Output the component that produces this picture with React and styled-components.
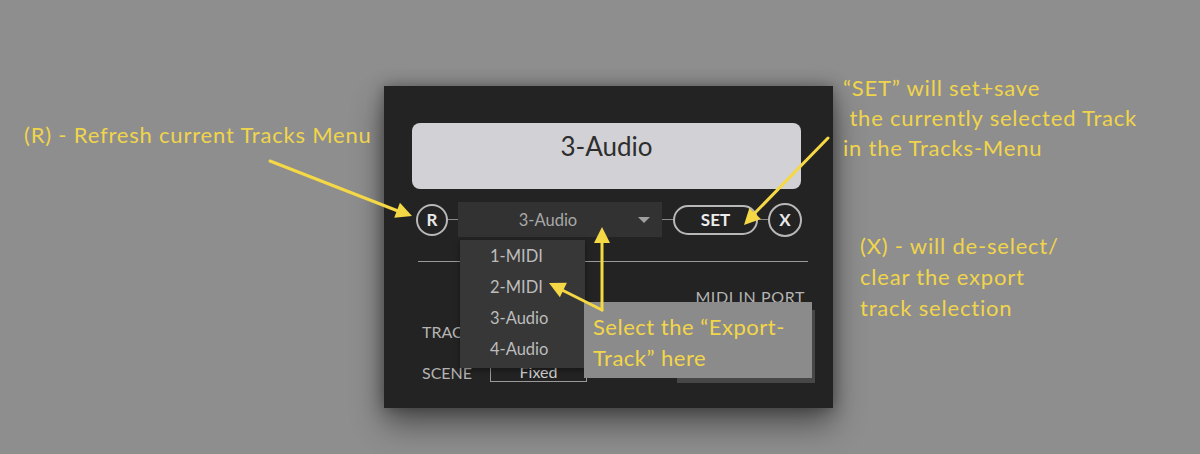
import React from "react";
import styled, { createGlobalStyle } from "styled-components";

const GlobalStyle = createGlobalStyle`
  html, body {
    margin: 0;
    padding: 0;
    background: #8e8e8e;
  }
`;

const Page = styled.div`
  position: relative;
  width: 1200px;
  height: 454px;
  overflow: hidden;
  background: #8e8e8e;
  padding: 86px 0 0 384px;
  box-sizing: border-box;
`;

const Panel = styled.div`
  position: relative;
  width: 449px;
  height: 322px;
  box-sizing: border-box;
  padding: 37px 32px 0 28px;
  background: #232323;
  box-shadow: 0 16px 30px rgba(0, 0, 0, 0.45), 0 0 14px rgba(0, 0, 0, 0.35);
  display: flex;
  flex-direction: column;
  font-family: "Lato", "Open Sans", sans-serif;
`;

const Display = styled.div`
  height: 66px;
  box-sizing: border-box;
  padding-top: 7px;
  border-radius: 8px;
  background: #d2d2d6;
  color: #2e2e2e;
  font-size: 26px;
  display: flex;
  align-items: flex-start;
  justify-content: center;
`;

const Row = styled.div`
  margin-top: 13px;
  margin-left: 4px;
  height: 35px;
  display: flex;
  align-items: center;
`;

const Circle = styled.div`
  width: ${(p) => p.size}px;
  height: ${(p) => p.size}px;
  box-sizing: border-box;
  border: 2px solid #b8b8b8;
  border-radius: 50%;
  color: #e8e8e8;
  font-size: 17px;
  font-weight: 700;
  display: flex;
  align-items: center;
  justify-content: center;
  flex-shrink: 0;
`;

const Connector = styled.div`
  width: ${(p) => p.w}px;
  height: 1px;
  background: #8a8a8a;
  flex-shrink: 0;
`;

const Dropdown = styled.div`
  position: relative;
  width: 204px;
  height: 35px;
  box-sizing: border-box;
  padding-right: 24px;
  background: #323232;
  color: #a8a8a8;
  font-size: 16.5px;
  display: flex;
  align-items: center;
  justify-content: center;
  flex-shrink: 0;
`;

const Caret = styled.span`
  position: absolute;
  right: 12px;
  top: 15px;
  width: 0;
  height: 0;
  border-left: 6px solid transparent;
  border-right: 6px solid transparent;
  border-top: 6px solid #a0a0a0;
`;

const Menu = styled.div`
  position: absolute;
  left: 2px;
  top: 38px;
  width: 125px;
  height: 128px;
  background: #373737;
  box-shadow: 0 2px 6px rgba(0, 0, 0, 0.4);
  z-index: 3;
  display: flex;
  flex-direction: column;
  padding: 1px 0 0 30px;
  box-sizing: border-box;
`;

const MenuItem = styled.div`
  height: 31px;
  line-height: 31px;
  color: #bdbdbd;
  font-size: 16.5px;
`;

const SetButton = styled.div`
  width: 85px;
  height: 30px;
  box-sizing: border-box;
  border: 2px solid #b8b8b8;
  border-radius: 15px;
  color: #ececec;
  font-size: 17px;
  font-weight: 700;
  display: flex;
  align-items: center;
  justify-content: center;
  flex-shrink: 0;
`;

const Divider = styled.div`
  margin: 24px -7px 0 6px;
  height: 1px;
  background: #9a9a9a;
`;

const Lower = styled.div`
  position: relative;
  flex: 1;
  display: grid;
  grid-template-columns: 68px 97px 1fr;
  grid-template-rows: 44px 51px 30px;
  margin-left: 10px;
  margin-right: -14px;
`;

const Label = styled.div`
  color: #b4b4b4;
  font-size: 16px;
  letter-spacing: ${(p) => p.ls || 0}px;
  padding-right: ${(p) => p.pr || 0}px;
  display: flex;
  align-items: ${(p) => p.align || "center"};
  justify-content: ${(p) => p.justify || "flex-start"};
  grid-column: ${(p) => p.col || "auto"};
  grid-row: ${(p) => p.row || "auto"};
`;

const Field = styled.div`
  grid-column: ${(p) => p.col};
  grid-row: ${(p) => p.row};
  margin: ${(p) => p.m || "0"};
  padding-top: ${(p) => p.pt || 0}px;
  border: ${(p) => (p.bg ? "none" : "1px solid #9a9a9a")};
  border-top: none;
  color: #d0d0d0;
  font-size: 16px;
  display: flex;
  align-items: center;
  justify-content: center;
  background: ${(p) => p.bg || "transparent"};
`;

const Tooltip = styled.div`
  position: absolute;
  left: 162px;
  top: 40px;
  width: 228px;
  height: 76px;
  box-sizing: border-box;
  padding: 9px 0 0 9px;
  background: #8b8b8b;
  color: #f2d64a;
  font-family: "Lato", "Open Sans", sans-serif;
  font-size: 22px;
  letter-spacing: 0.5px;
  line-height: 31px;
  z-index: 4;
`;

const Note = styled.div`
  position: absolute;
  left: ${(p) => p.x}px;
  top: ${(p) => p.y}px;
  color: #f0d54c;
  font-family: "Lato", "Open Sans", sans-serif;
  font-size: 22px;
  letter-spacing: 0.8px;
  line-height: ${(p) => p.lh || 30}px;
  white-space: pre;
`;

const Arrows = styled.svg`
  position: absolute;
  left: 0;
  top: 0;
  width: 1200px;
  height: 454px;
  pointer-events: none;
  z-index: 10;
`;

function Head({ x, y, angle }) {
  return (
    <polygon
      points="0,0 -16,-8 -16,8"
      fill="#f5d845"
      transform={`translate(${x} ${y}) rotate(${angle})`}
    />
  );
}

function App() {
  return (
    <Page>
      <GlobalStyle />
      <Panel>
        <Display>3-Audio</Display>
        <Row>
          <Circle size={32}>R</Circle>
          <Connector w={10} />
          <Dropdown>
            3-Audio
            <Caret />
            <Menu>
              <MenuItem>1-MIDI</MenuItem>
              <MenuItem>2-MIDI</MenuItem>
              <MenuItem>3-Audio</MenuItem>
              <MenuItem>4-Audio</MenuItem>
            </Menu>
          </Dropdown>
          <Connector w={11} />
          <SetButton>SET</SetButton>
          <Connector w={10} />
          <Circle size={34}>X</Circle>
        </Row>
        <Divider />
        <Lower>
          <Label col="3" row="1" justify="flex-end" align="flex-end" ls={0.6} pr={10}>
            MIDI IN PORT
          </Label>
          <Label col="1" row="2">TRACK</Label>
          <Label col="1" row="3">SCENE</Label>
          <Field col="2" row="3" m="0 0 5px 0" pt={4}>
            Fixed
          </Field>
          <Field col="3" row="2 / span 2" m="4px 0 4px 90px" bg="#474747" />
          <Tooltip>
            Select the “Export-
            <br />
            Track” here
          </Tooltip>
        </Lower>
      </Panel>

      <Note x={24} y={120}>(R) - Refresh current Tracks Menu</Note>
      <Note x={843} y={73} lh={30}>
        {"“SET” will set+save\n the currently selected Track\nin the Tracks-Menu"}
      </Note>
      <Note x={860} y={230} lh={31}>
        {"(X) - will de-select/\nclear the export\ntrack selection"}
      </Note>

      <Arrows viewBox="0 0 1200 454">
        <g stroke="#f5d845" strokeWidth="3" strokeLinecap="round" fill="none">
          <line x1="270" y1="161" x2="398" y2="211" />
          <line x1="828" y1="138" x2="752" y2="216" />
          <line x1="602" y1="310" x2="602" y2="240" />
          <line x1="602" y1="310" x2="562" y2="290" />
        </g>
        <Head x={412} y={216} angle={21} />
        <Head x={744} y={225} angle={134} />
        <Head x={602} y={227} angle={-90} />
        <Head x={549} y={283} angle={206} />
      </Arrows>
    </Page>
  );
}

export default App;
